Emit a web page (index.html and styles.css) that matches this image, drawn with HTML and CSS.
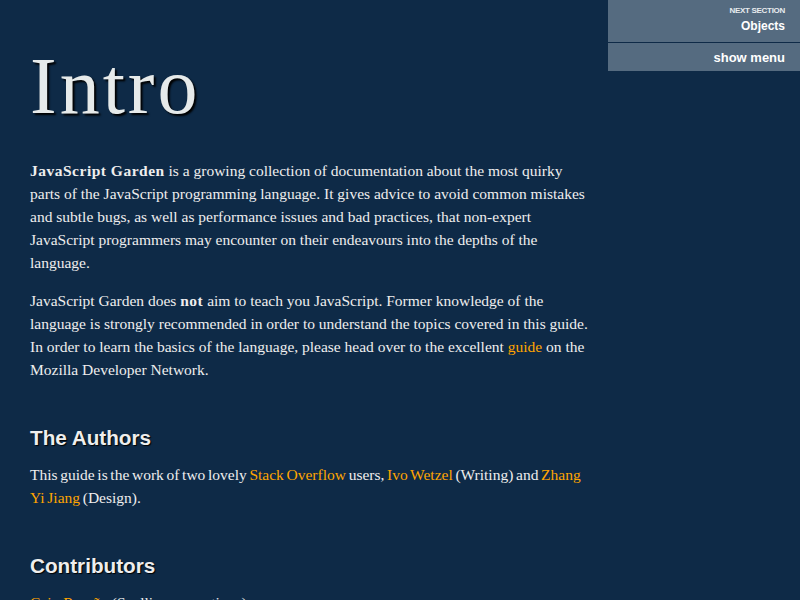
FILE: index.html
```html
<!DOCTYPE html>
<html>
<head>
<meta charset="utf-8">
<link rel="stylesheet" href="styles.css">
</head>
<body>
<nav class="nav">
  <a class="next" href="#">
    <span class="next-label">Next section</span>
    <span class="next-title">Objects</span>
  </a>
  <a class="menu" href="#">show menu</a>
</nav>
<main class="content">
  <h1 class="title">Intro</h1>
  <p><strong>JavaScript Garden</strong> is a growing collection of documentation about the most quirky parts of the JavaScript programming language. It gives advice to avoid common mistakes and subtle bugs, as well as performance issues and bad practices, that non-expert JavaScript programmers may encounter on their endeavours into the depths of the language.</p>
  <p>JavaScript Garden does <strong>not</strong> aim to teach you JavaScript. Former knowledge of the language is strongly recommended in order to understand the topics covered in this guide. In order to learn the basics of the language, please head over to the excellent <a href="#">guide</a> on the Mozilla Developer Network.</p>
  <h2 class="section">The Authors</h2>
  <p class="tight">This guide is the work of two lovely <a href="#">Stack Overflow</a> users, <a href="#">Ivo Wetzel</a> (Writing) and <a href="#">Zhang Yi Jiang</a> (Design).</p>
  <h2 class="section">Contributors</h2>
  <p><a href="#">Caio Romão</a> (Spelling corrections)</p>
</main>
</body>
</html>
```
FILE: styles.css
```css
html, body {
  margin: 0;
  padding: 0;
  background: #0e2a47;
  height: 100%;
  overflow: hidden;
}
body {
  color: #eeeeee;
  font-family: "Liberation Serif", Georgia, serif;
  font-size: 15.5px;
  line-height: 23px;
}
.content {
  width: 560px;
  padding: 0 0 0 30px;
}
.title {
  font-family: "Liberation Serif", Georgia, serif;
  font-weight: normal;
  font-size: 80px;
  line-height: 1;
  letter-spacing: 3px;
  margin: 46px 0 33px 0;
  color: #e6eaea;
  text-shadow: 2px 2px 2px #000;
}
p {
  margin: 0 0 15px 0;
}
.tight {
  word-spacing: -1.2px;
}
strong { font-weight: bold; letter-spacing: 0.5px; }
a { color: #ffa500; text-decoration: none; }
.section {
  font-family: "Liberation Sans", Arial, sans-serif;
  font-weight: bold;
  font-size: 20.7px;
  line-height: 24px;
  margin: 45px 0 13px 0;
  color: #eeeeee;
  text-shadow: 1px 1px 1px #000;
}
.nav {
  position: fixed;
  top: 0;
  right: 0;
  width: 192px;
  background: #0e2a47;
  font-family: "Liberation Sans", Arial, sans-serif;
}
.next {
  display: flex;
  flex-direction: column;
  align-items: flex-end;
  background: #556b80;
  padding: 6px 15px 6px 0;
  color: #fff;
  height: 30px;
}
.next-label {
  font-size: 8px;
  line-height: 9px;
  text-transform: uppercase;
  font-weight: bold;
  letter-spacing: -0.3px;
  color: #e8ecef;
}
.next-title {
  font-size: 12px;
  line-height: 22px;
  font-weight: bold;
  color: #fff;
}
.menu {
  display: block;
  margin-top: 1px;
  background: #556b80;
  color: #fff;
  text-align: right;
  padding: 1px 15px 0 0;
  height: 27px;
  line-height: 28px;
  font-size: 13px;
  font-weight: bold;
}
```
